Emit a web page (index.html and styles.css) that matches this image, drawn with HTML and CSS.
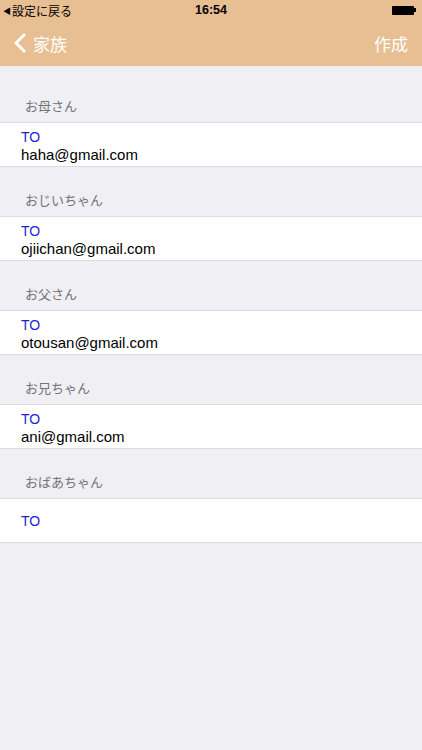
FILE: index.html
```html
<!DOCTYPE html>
<html lang="ja">
<head>
  <meta charset="UTF-8">
  <title>家族</title>
  <meta name="viewport" content="width=device-width, initial-scale=1.0">
  <link rel="stylesheet" href="styles.css">
</head>
<body>
  <div class="topbar">
    <div class="status">
      <span class="status-back"><span class="tri">&#9664;</span>設定に戻る</span>
      <span class="status-time">16:54</span>
      <span class="battery"><span class="battery-body"></span><span class="battery-nub"></span></span>
    </div>
    <div class="nav">
      <a class="nav-back">
        <svg width="13" height="20" viewBox="0 0 13 20"><path d="M11 2 L3 10 L11 18" fill="none" stroke="#fff" stroke-width="3" stroke-linecap="round" stroke-linejoin="round"/></svg>
        <span>家族</span>
      </a>
      <a class="nav-action">作成</a>
    </div>
  </div>

  <div class="list">
    <div class="section first">
      <div class="section-title">お母さん</div>
      <div class="row">
        <div class="to">TO</div>
        <div class="mail">haha@gmail.com</div>
      </div>
    </div>
    <div class="section">
      <div class="section-title">おじいちゃん</div>
      <div class="row">
        <div class="to">TO</div>
        <div class="mail">ojiichan@gmail.com</div>
      </div>
    </div>
    <div class="section">
      <div class="section-title">お父さん</div>
      <div class="row">
        <div class="to">TO</div>
        <div class="mail">otousan@gmail.com</div>
      </div>
    </div>
    <div class="section">
      <div class="section-title">お兄ちゃん</div>
      <div class="row">
        <div class="to">TO</div>
        <div class="mail">ani@gmail.com</div>
      </div>
    </div>
    <div class="section">
      <div class="section-title">おばあちゃん</div>
      <div class="row single">
        <div class="to">TO</div>
      </div>
    </div>
  </div>
</body>
</html>
```

FILE: styles.css
```css
body {
  margin: 0;
  min-height: 750px;
  background: #efeff4;
  font-family: 'Liberation Sans', 'Noto Sans CJK JP', sans-serif;
  color: #000;
}

.topbar {
  background: #e8be93;
  height: 66px;
}

.status {
  height: 20px;
  display: flex;
  align-items: center;
  justify-content: space-between;
  padding: 0 6px 0 3px;
  font-size: 12px;
  position: relative;
}

.status-back {
  display: flex;
  align-items: center;
}

.tri {
  font-size: 8px;
  margin-right: 1px;
}

.status-time {
  position: absolute;
  left: 0;
  right: 0;
  text-align: center;
  font-weight: bold;
  font-size: 12.5px;
}

.battery {
  display: flex;
  align-items: center;
}

.battery-body {
  width: 22px;
  height: 9px;
  background: #000;
  border-radius: 1px;
}

.battery-nub {
  width: 2px;
  height: 4px;
  background: #000;
}

.nav {
  height: 46px;
  display: flex;
  align-items: center;
  justify-content: space-between;
  padding: 0 14px 0 13px;
  color: #fff;
  font-size: 17px;
}

.nav-back {
  display: flex;
  align-items: center;
  gap: 7px;
}

.nav-back svg {
  display: block;
}

.list {
  padding-top: 7px;
}

.section-title {
  height: 49px;
  box-sizing: border-box;
  padding: 0 25px 7px;
  display: flex;
  align-items: flex-end;
  font-size: 13px;
  color: #737378;
}

.row {
  background: #fff;
  height: 45px;
  box-sizing: border-box;
  border-top: 1px solid #dcdce0;
  border-bottom: 1px solid #dcdce0;
  padding: 5px 21px 0;
}

.to {
  color: #1e1ed2;
  font-size: 14px;
  line-height: 18px;
}

.mail {
  font-size: 15px;
  line-height: 18px;
}

.row.single {
  display: flex;
  align-items: center;
  padding-top: 0;
}
```
